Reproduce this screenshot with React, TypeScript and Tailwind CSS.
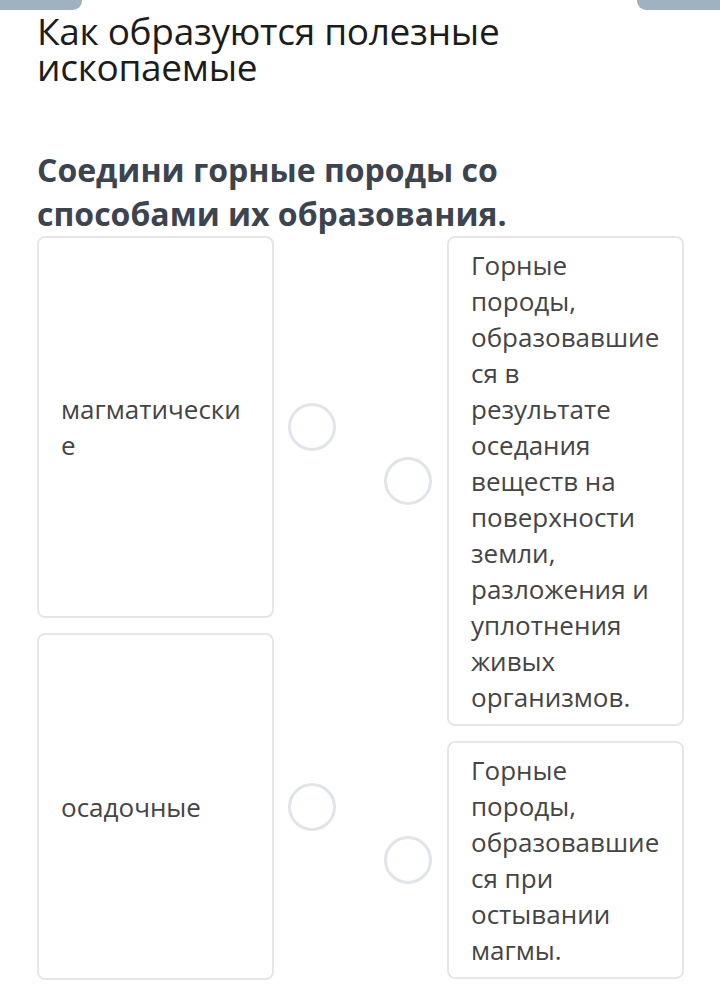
import React from "react";

function Circle() {
  return (
    <div className="w-[48px] h-[48px] shrink-0 rounded-full border-[3px] border-[#e1e4e8] bg-white" />
  );
}

function Card({ text, h }: { text: string; h?: string }) {
  return (
    <div
      className={
        "w-[237px] shrink-0 rounded-[8px] border-2 border-[#e6e6e6] bg-white px-[22px] py-[9px] flex items-center text-[26px] leading-[36px] text-[#454545] break-words " +
        (h ?? "")
      }
      style={{ overflowWrap: "anywhere" }}
    >
      <div className="w-full">{text}</div>
    </div>
  );
}

export default function App() {
  return (
    <div
      className="relative w-[720px] min-h-[997px] bg-white overflow-hidden"
      style={{ fontFamily: '"Open Sans", "Noto Sans", sans-serif' }}
    >
      <div className="absolute left-0 top-0 w-[82px] h-[10px] bg-[#a0b2c1] rounded-br-[9px]" />
      <div className="absolute right-0 top-0 w-[83px] h-[10px] bg-[#a0b2c1] rounded-bl-[9px]" />

      <div className="px-[37px] pt-[13px]">
        <h1 className="w-[520px] text-[37px] leading-[36px] text-[#1c1c1c] font-normal tracking-[-0.3px]">
          Как образуются полезные ископаемые
        </h1>
        <h2 className="mt-[63px] text-[32px] leading-[44px] font-bold text-[#3c4450] w-[540px]">
          Соедини горные породы со способами их образования.
        </h2>
      </div>

      <div className="flex px-[37px] gap-[48px]">
        <div className="flex flex-col gap-[15px]">
          <div className="flex items-center gap-[14px]">
            <Card text="магматические" h="h-[382px]" />
            <Circle />
          </div>
          <div className="flex items-center gap-[14px]">
            <Card text="осадочные" h="h-[347px]" />
            <Circle />
          </div>
        </div>
        <div className="flex flex-col gap-[15px]">
          <div className="flex items-center gap-[15px]">
            <Circle />
            <Card text="Горные породы, образовавшиеся в результате оседания веществ на поверхности земли, разложения и уплотнения живых организмов." />
          </div>
          <div className="flex items-center gap-[15px]">
            <Circle />
            <Card text="Горные породы, образовавшиеся при остывании магмы." />
          </div>
        </div>
      </div>
    </div>
  );
}
